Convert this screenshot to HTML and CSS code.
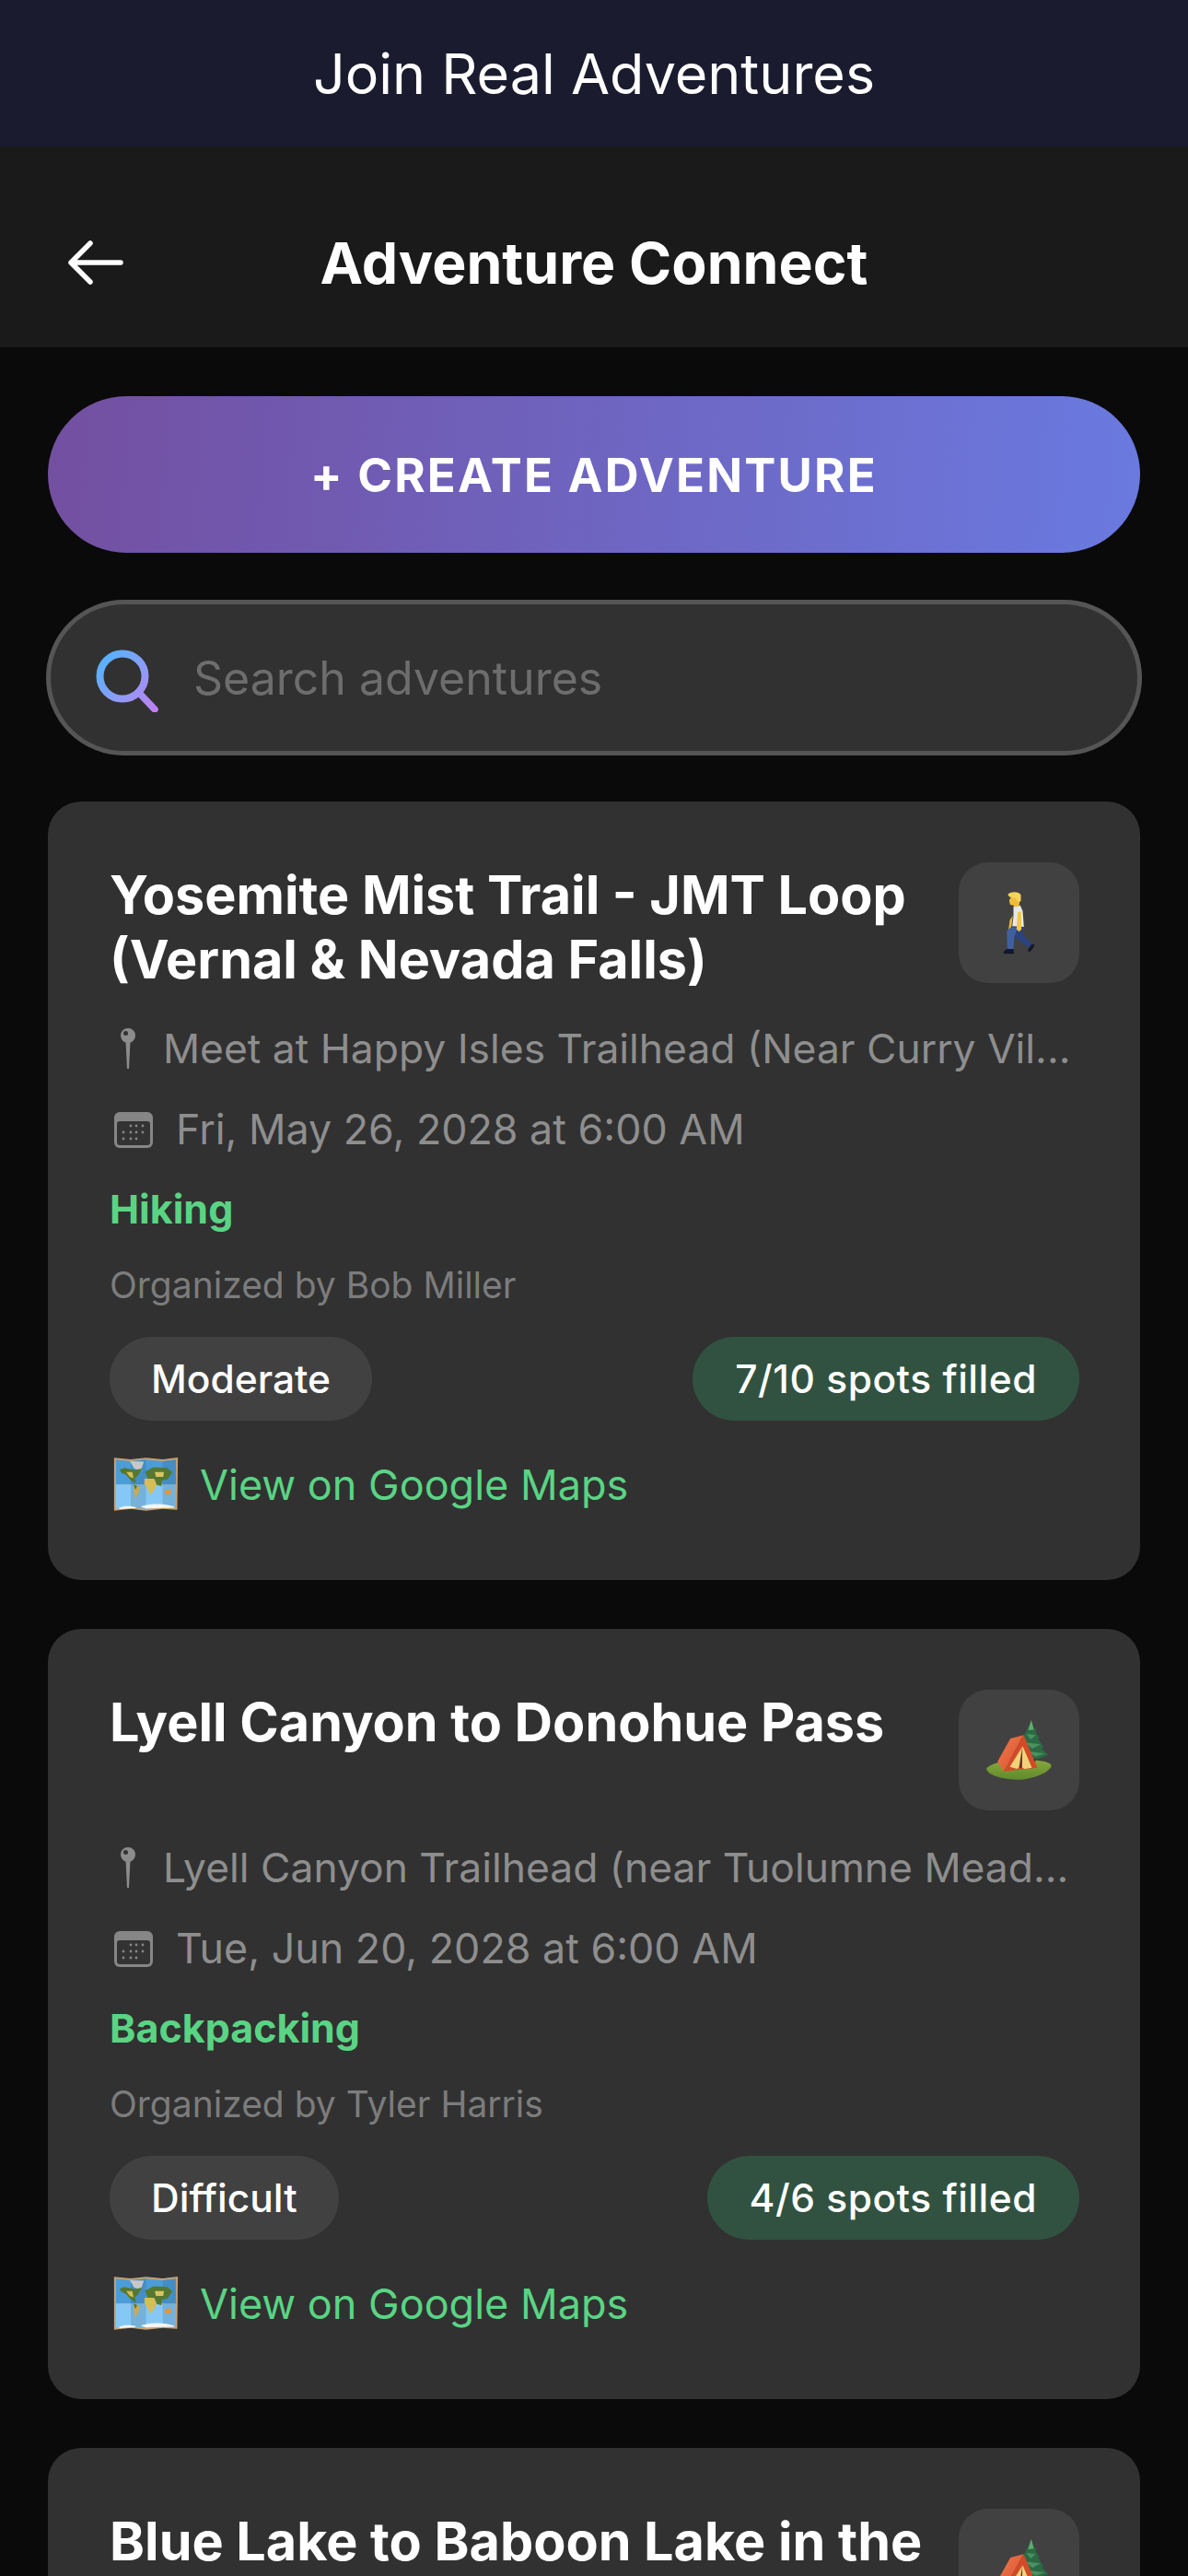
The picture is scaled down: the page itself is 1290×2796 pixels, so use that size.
FILE: index.html
```html
<!DOCTYPE html>
<html lang="en">
<head>
    <meta charset="UTF-8">
    <meta name="viewport" content="width=device-width, initial-scale=1.0">
    <title>Adventure Connect</title>
    <link rel="stylesheet" href="styles.css">
</head>
<body>
    <!-- shared icons -->
    <svg class="defs" aria-hidden="true">
        <defs>
            <linearGradient id="searchGrad" gradientUnits="userSpaceOnUse" x1="0" y1="8" x2="66" y2="66">
                <stop offset="0" stop-color="#4db5ff"/>
                <stop offset="0.55" stop-color="#8f9bf5"/>
                <stop offset="1" stop-color="#c07ff2"/>
            </linearGradient>
            <linearGradient id="grassGrad" x1="0" y1="0" x2="0" y2="1">
                <stop offset="0" stop-color="#8aa83e"/>
                <stop offset="1" stop-color="#5f8a2c"/>
            </linearGradient>
            <linearGradient id="tentGrad" x1="0" y1="0" x2="1" y2="1">
                <stop offset="0" stop-color="#ef7a4c"/>
                <stop offset="1" stop-color="#d9502c"/>
            </linearGradient>
        </defs>
        <symbol id="pin" viewBox="0 0 58 44">
            <path d="M17.500 14 L19 44 L21 44 L22.500 14 Z" fill="#8c8c8c"/>
            <circle cx="20" cy="8" r="8" fill="#8c8c8c"/>
            <circle cx="17.500" cy="5.500" r="2.500" fill="#333"/>
        </symbol>
        <symbol id="calendar" viewBox="0 0 42 39">
            <rect x="0" y="0" width="42" height="39" rx="6" fill="#868686"/>
            <rect x="3" y="10" width="36" height="26" rx="3" fill="#333"/>
            <g fill="#868686">
                <circle cx="18" cy="15" r="1.400"/><circle cx="24" cy="15" r="1.400"/><circle cx="31" cy="15" r="1.400"/>
                <circle cx="10" cy="22" r="1.400"/><circle cx="18" cy="22" r="1.400"/><circle cx="24" cy="22" r="1.400"/><circle cx="31" cy="22" r="1.400"/>
                <circle cx="10" cy="29" r="1.400"/><circle cx="18" cy="29" r="1.400"/><circle cx="24" cy="29" r="1.400"/>
            </g>
        </symbol>
        <symbol id="walker" viewBox="270 148 104 204">
            <path d="M310 265 L336 262 L333 285 L364 318 L354 330 L312 298 Z" fill="#2b4480"/>
            <path d="M282 278 C288 262 305 262 316 265 L306 300 L304 336 L284 336 Z" fill="#3f5f9f"/>
            <path d="M272 342 L282 334 L304 334 L306 350 L272 350 Z" fill="#14182a"/>
            <path d="M350 338 L362 320 L372 318 L370 328 L356 345 Z" fill="#14182a"/>
            <path d="M302 225 L297 262 L288 270 L292 240 Z" fill="#e9b737"/>
            <path d="M304 196 L326 192 L334 210 L338 262 L300 260 L304 228 Z" fill="#e6e6e6"/>
            <path d="M318 215 L328 212 L330 270 L322 278 L314 270 Z" fill="#f5c63e"/>
            <path d="M296 165 L326 165 L322 195 L306 197 L304 192 L293 190 L290 176 Z" fill="#efbb38"/>
            <path d="M286 156 C296 146 322 146 328 158 L328 178 L318 182 L312 168 L296 166 C290 164 286 160 286 156 Z" fill="#f6d35a"/>
        </symbol>
        <symbol id="camp" viewBox="212 183 212 195">
            <path d="M212 340 C232 320 300 306 360 312 C400 316 424 322 423 332 C420 352 360 378 310 377 C262 376 212 362 212 340 Z" fill="url(#grassGrad)"/>
            <rect x="362" y="296" width="10" height="22" fill="#4a3320"/>
            <path d="M358 183 L368 212 L374 210 L372 222 L384 240 L380 244 L398 272 L392 276 L414 296 L384 308 L352 310 L322 290 L336 252 L330 240 L344 214 Z" fill="#2c6a45"/>
            <path d="M358 183 L366 214 L348 216 Z" fill="#5fae6c"/>
            <path d="M342 228 L372 232 L356 246 Z M336 256 L388 262 L362 276 Z M346 284 L402 292 L372 302 Z" fill="#4a9160"/>
            <path d="M248 318 L290 243 L333 232 L268 350 Z" fill="url(#tentGrad)"/>
            <path d="M333 232 L378 338 L268 350 Z" fill="#d24a28"/>
            <path d="M330 268 L288 335 L312 342 L322 334 L336 342 L360 338 Z" fill="#f0d27a"/>
            <path d="M329 270 L318 338 L328 338 Z" fill="#6a3018"/>
        </symbol>
        <symbol id="map" viewBox="38 33 214 182">
            <path d="M40 37 L95 42 L145 37 L200 42 L250 36 L248 208 L200 205 L145 211 L95 205 L40 211 Z" fill="#c9a271"/>
            <path d="M46 43 L95 48 L145 43 L200 48 L244 43 L244 125 L46 125 Z" fill="#4b9dd9"/>
            <path d="M46 125 L244 125 L243 202 L200 199 L145 205 L95 199 L46 205 Z" fill="#86c8f5"/>
            <path d="M95 48 L145 43 L145 205 L95 199 Z M200 48 L244 43 L243 202 L200 199 Z" fill="#26486a" opacity="0.18"/>
            <path d="M92 48 L138 50 L128 80 L106 72 Z" fill="#c8c8c8"/>
            <path d="M58 76 L74 70 L110 78 L132 72 L118 96 L108 104 L112 122 L96 112 L80 94 L64 86 Z" fill="#55782f"/>
            <path d="M80 84 L100 84 L104 104 L92 100 Z" fill="#d6bd58"/>
            <path d="M104 124 L124 134 L120 152 L108 174 L106 150 Z" fill="#cfa944"/>
            <path d="M104 124 L116 130 L110 142 Z" fill="#4f7a2c"/>
            <path d="M142 82 L170 68 L214 70 L232 84 L216 108 L198 112 L196 130 L180 126 L176 112 L150 104 Z" fill="#55782f"/>
            <path d="M140 106 L172 106 L180 126 L170 146 L160 160 L152 142 L140 124 Z" fill="#d6bd58"/>
            <path d="M174 84 L204 84 L202 100 L178 100 Z" fill="#d9c468"/>
            <path d="M205 146 L226 140 L228 156 L210 158 Z" fill="#e4953a"/>
            <path d="M56 202 C70 194 96 194 112 200 L110 203 L58 206 Z M128 198 C150 186 210 186 238 198 L238 201 L145 204 Z" fill="#f4f4f4"/>
        </symbol>
    </svg>

    <div class="banner">Join Real Adventures</div>

    <header class="nav">
        <svg class="back-icon" viewBox="0 0 60 48" aria-label="Back">
            <path d="M57 24 H4 M24 3 L3 24 L24 45" fill="none" stroke="#fff" stroke-width="5.500" stroke-linecap="round" stroke-linejoin="round"/>
        </svg>
        <h1>Adventure Connect</h1>
    </header>

    <main class="content">
        <button class="create-btn">+ CREATE ADVENTURE</button>

        <div class="search">
            <svg class="search-icon" viewBox="0 0 68 68" aria-hidden="true">
                <path d="M48 48 L64 65" fill="none" stroke="url(#searchGrad)" stroke-width="7.500" stroke-linecap="round"/>
                <circle cx="29" cy="29" r="24.500" fill="none" stroke="url(#searchGrad)" stroke-width="8"/>
            </svg>
            <span>Search adventures</span>
        </div>

        <article class="card">
            <div class="card-head">
                <h2>Yosemite Mist Trail - JMT Loop (Vernal &amp; Nevada Falls)</h2>
                <div class="type-icon"><svg class="walker"><use href="#walker"/></svg></div>
            </div>
            <div class="meta meta-place">
                <svg class="pin"><use href="#pin"/></svg>
                <span>Meet at Happy Isles Trailhead (Near Curry Vil...</span>
            </div>
            <div class="meta meta-date">
                <svg class="calendar"><use href="#calendar"/></svg>
                <span>Fri, May 26, 2028 at 6:00 AM</span>
            </div>
            <div class="category">Hiking</div>
            <div class="organizer">Organized by Bob Miller</div>
            <div class="pills">
                <span class="pill">Moderate</span>
                <span class="pill pill-spots">7/10 spots filled</span>
            </div>
            <a class="map-link"><svg class="map"><use href="#map"/></svg>View on Google Maps</a>
        </article>

        <article class="card">
            <div class="card-head">
                <h2>Lyell Canyon to Donohue Pass</h2>
                <div class="type-icon"><svg class="camp"><use href="#camp"/></svg></div>
            </div>
            <div class="meta meta-place">
                <svg class="pin"><use href="#pin"/></svg>
                <span>Lyell Canyon Trailhead (near Tuolumne Mead...</span>
            </div>
            <div class="meta meta-date">
                <svg class="calendar"><use href="#calendar"/></svg>
                <span>Tue, Jun 20, 2028 at 6:00 AM</span>
            </div>
            <div class="category">Backpacking</div>
            <div class="organizer">Organized by Tyler Harris</div>
            <div class="pills">
                <span class="pill">Difficult</span>
                <span class="pill pill-spots">4/6 spots filled</span>
            </div>
            <a class="map-link"><svg class="map"><use href="#map"/></svg>View on Google Maps</a>
        </article>

        <article class="card">
            <div class="card-head">
                <h2>Blue Lake to Baboon Lake in the</h2>
                <div class="type-icon"><svg class="camp"><use href="#camp"/></svg></div>
            </div>
        </article>
    </main>
</body>
</html>
```

FILE: styles.css
```css
html, body {
    margin: 0;
    padding: 0;
    height: 2796px;
    overflow: hidden;
}
body {
    background: #0a0a0a;
    color: #fff;
    font-family: Inter, "Noto Sans", sans-serif;
}
.defs {
    position: absolute;
    width: 0;
    height: 0;
}
.banner {
    height: 159px;
    background: #1a1b2e;
    display: flex;
    align-items: center;
    justify-content: center;
    font-size: 61px;
    font-weight: 400;
}
.nav {
    height: 218px;
    box-sizing: border-box;
    padding: 34px 74px 0 74px;
    background: #1a1a1a;
    display: grid;
    grid-template-columns: 1fr auto 1fr;
    align-items: center;
}
.nav h1 {
    margin: 0;
    font-size: 62.500px;
    font-weight: 700;
}
.back-icon {
    width: 60px;
    height: 48px;
}
.content {
    padding: 53px 52px 0 52px;
    display: flex;
    flex-direction: column;
}
.create-btn {
    height: 170px;
    border: none;
    border-radius: 85px;
    background: linear-gradient(95deg, #734fa0, #6a7ae0);
    color: #fff;
    font-family: inherit;
    font-size: 51px;
    font-weight: 700;
    letter-spacing: 2.200px;
}
.search {
    height: 169px;
    box-sizing: border-box;
    margin: 51px -2px 0 -2px;
    border: 5px solid #555;
    border-radius: 85px;
    background: #313131;
    display: flex;
    align-items: center;
    padding-left: 49px;
    color: #6d6d6d;
    font-size: 50px;
}
.search-icon {
    width: 68px;
    height: 68px;
    margin-right: 38px;
    position: relative;
    top: 3px;
}
.card {
    margin-top: 50px;
    margin-bottom: 3px;
    padding: 66px 66px 65px 67px;
    background: #313131;
    border-radius: 36px;
}
.card-head {
    display: flex;
    justify-content: space-between;
    align-items: flex-start;
    gap: 30px;
}
.card-head h2 {
    margin: 0;
    font-size: 57.500px;
    line-height: 70px;
    font-weight: 700;
}
.type-icon {
    flex: none;
    width: 131px;
    height: 131px;
    border-radius: 32px;
    background: #414141;
    display: flex;
    align-items: center;
    justify-content: center;
}
.walker {
    width: 35px;
    height: 68px;
}
.camp {
    width: 71px;
    height: 65px;
}
.meta {
    display: flex;
    align-items: center;
    height: 60px;
    color: #8e8e8e;
    font-size: 44.800px;
    white-space: nowrap;
}
.meta-place {
    margin-top: 32px;
    font-size: 44.400px;
}
.meta-date {
    margin-top: 28px;
}
.pin {
    flex: none;
    width: 58px;
    height: 44px;
}
.calendar {
    flex: none;
    width: 42px;
    height: 39px;
    margin: 0 25px 0 5px;
}
.category {
    margin-top: 30px;
    color: #5ad484;
    font-size: 43px;
    font-weight: 700;
    line-height: 52px;
}
.organizer {
    margin-top: 34px;
    color: #7c7c7c;
    font-size: 39px;
    line-height: 46px;
}
.pills {
    margin-top: 33px;
    display: flex;
    justify-content: space-between;
}
.pill {
    height: 91px;
    padding: 0 45px;
    border-radius: 46px;
    background: #414141;
    display: flex;
    align-items: center;
    font-size: 42.500px;
    font-weight: 500;
}
.pill-spots {
    background: #325241;
    letter-spacing: 0.500px;
    padding: 0 46px;
}
.map-link {
    margin-top: 30px;
    height: 78px;
    display: flex;
    align-items: center;
    color: #5ad484;
    font-size: 45px;
}
.map {
    width: 71px;
    height: 60px;
    margin: 0 23px 0 4px;
}
```
